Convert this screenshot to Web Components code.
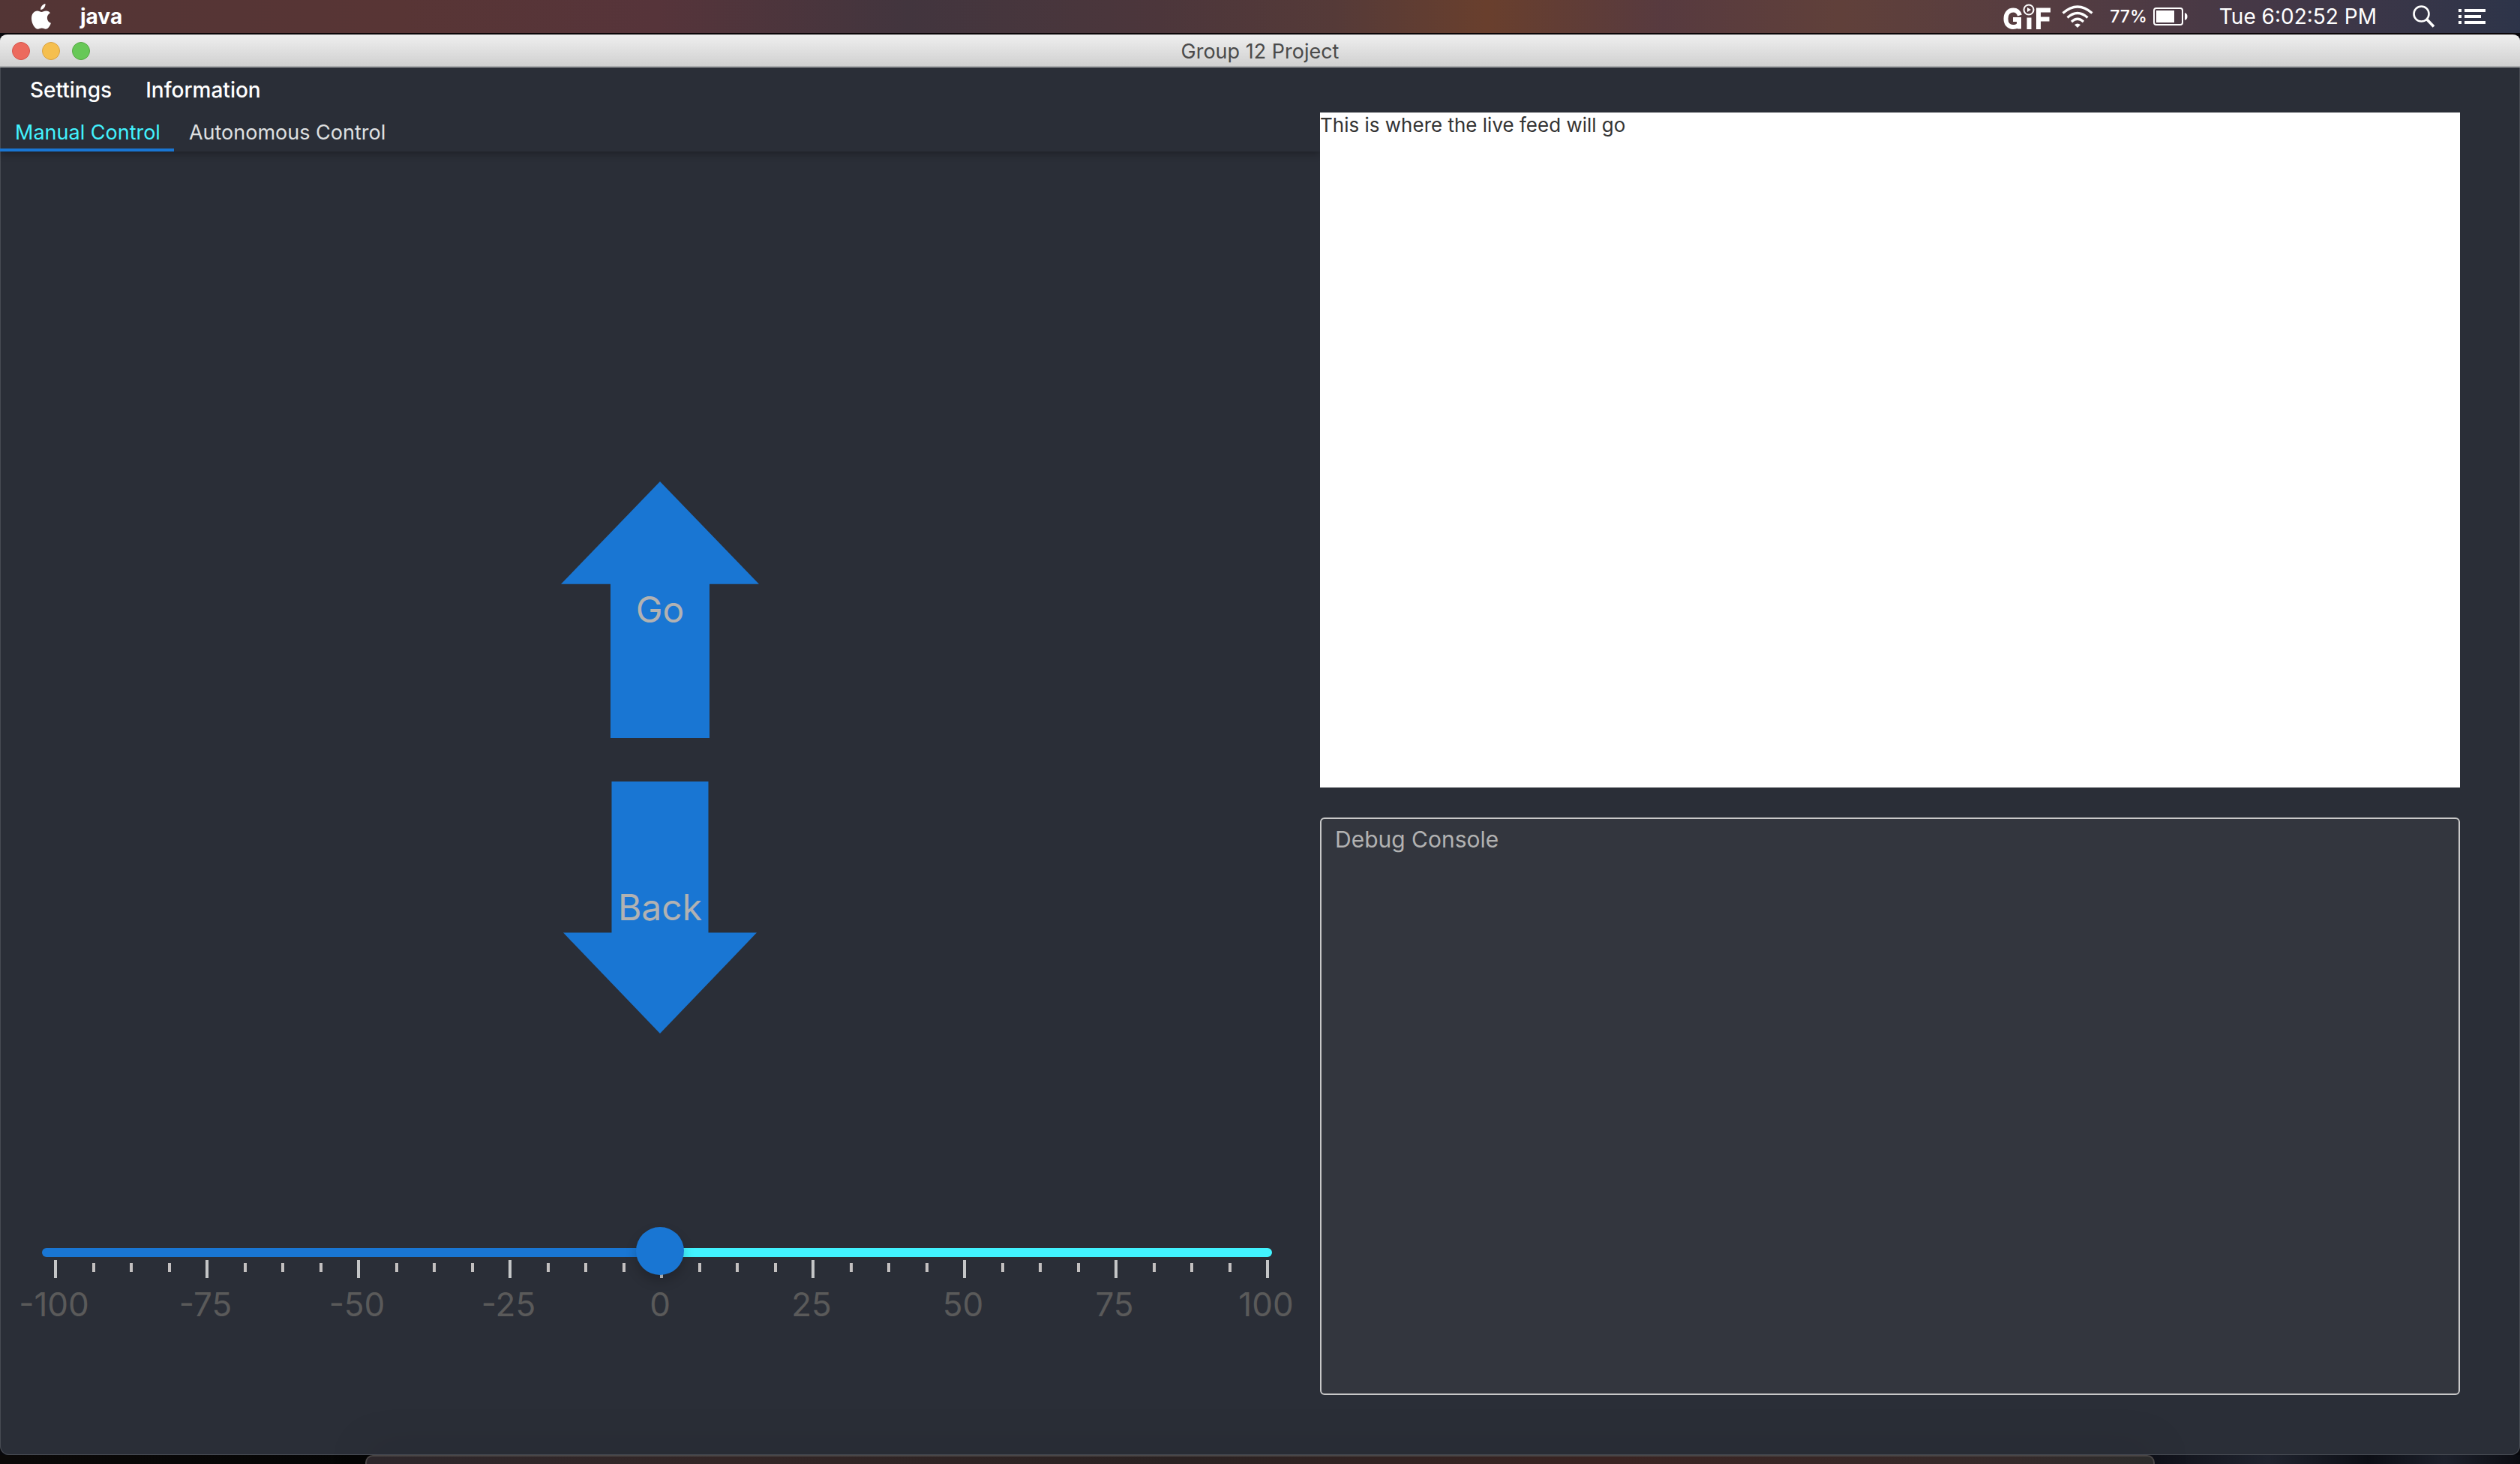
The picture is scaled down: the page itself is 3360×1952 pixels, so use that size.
<!DOCTYPE html>
<html lang="en">
<head>
<meta charset="utf-8">
<title>Group 12 Project</title>
<style>
  html, body { height: 100%; margin: 0; }
  body { font-family: Inter, "Liberation Sans", sans-serif; background: #08080c; }
</style>
</head>
<body>
<desktop-screen>
  <system-bar slot="bar" app="java" battery="77%" clock="Tue 6:02:52 PM"></system-bar>
  <app-window heading="Group 12 Project">
    <menu-row slot="menu"><button>Settings</button><button>Information</button></menu-row>
    <tab-strip slot="main">
      <button slot="tab" role="tab" aria-selected="true">Manual Control</button>
      <button slot="tab" role="tab" aria-selected="false">Autonomous Control</button>
      <drive-pad>
        <arrow-button direction="up">Go</arrow-button>
        <arrow-button direction="down">Back</arrow-button>
      </drive-pad>
      <steering-slider min="-100" max="100" step="25" value="0"></steering-slider>
    </tab-strip>
    <live-feed slot="side">This is where the live feed will go</live-feed>
    <debug-console slot="side" text="Debug Console"></debug-console>
  </app-window>
</desktop-screen>

<script>
function define(name, render) {
  customElements.define(name, class extends HTMLElement {
    connectedCallback() {
      if (this.shadowRoot) return;
      this.attachShadow({ mode: 'open' }).innerHTML = render(this);
    }
  });
}

define('desktop-screen', () => `
  <style>
    :host { display: flex; flex-direction: column; height: 100vh; overflow: hidden; }
    ::slotted(app-window) { flex: 1; min-height: 0; }
    .below { height: 12px; flex: none; display: flex; justify-content: center;
      background: linear-gradient(90deg, #0b0908, #050505 14%, #0a0b12 84%, #20242f 90%, #0c0e15 94%, #1d212c 97%, #0b0c12); }
    .dock { width: 71%; box-sizing: border-box; border: 2px solid #4a4646; border-bottom: 0;
      border-radius: 10px 10px 0 0;
      background: linear-gradient(90deg, #2d272b, #332626 20%, #2a2222 45%, #3a2422 70%, #352a2a 92%, #2c2c2c);
      box-shadow: 0 0 60px rgba(0,0,0,.25); }
  </style>
  <slot name="bar"></slot><slot></slot>
  <div class="below"><div class="dock"></div></div>`);

define('system-bar', el => `
  <style>
    :host { display: flex; align-items: center; height: 44px; flex: none; box-sizing: border-box;
      padding: 0 45px 0 41px; color: #fff; font-size: 28px; line-height: 44px;
      background: linear-gradient(90deg, #533535, #583535 16%, #56343a 26%, #42353e 36%, #4c363b 46%, #553a38 53%, #693f2d 59%, #573a3f 66%, #60403a 73%, #573d40 80%, #423747 91%, #2d3449); }
    svg { display: block; flex: none; }
    b { font-weight: 700; margin-left: 38px; }
    .right { margin-left: auto; display: flex; align-items: center; }
    .wifi { margin-left: 14px; }
    .pct { font-size: 23px; font-weight: 500; margin-left: 22px; }
    .bat { margin-left: 8px; }
    .clock { margin-left: 42px; }
    .find { margin-left: 48px; }
    .list { margin-left: 31px; }
  </style>
  <svg width="28" height="34" viewBox="0 0 28 34" fill="#fff"><path d="M19.5 0c.3 4-2.700 8-6.300 8C12.800 4.300 16 .6 19.500 0ZM26 12.300c-2.800 1.700-4.200 3.800-4.100 6.600.1 3.200 1.800 5.600 5 6.800-1.500 4.500-4.300 8-6.900 8-1.900 0-3.200-1.200-5.200-1.200-2.100 0-3.500 1.200-5.300 1.200C5.500 33.700 1 26.500 1 19.500 1 13.200 4.700 9.500 8.800 9.500c2.200 0 4 1.400 5.600 1.400 1.500 0 3.600-1.600 6.300-1.500 2.200.1 4.200 1.100 5.300 2.900Z"/></svg>
  <b>${el.getAttribute('app')}</b>
  <div class="right">
    <svg width="64" height="34" viewBox="0 0 64 34" fill="none" stroke="#fff" stroke-width="6"><path d="M22 15.500C20.500 11 17.500 8.500 13.500 8.500 7 8.500 3.500 13.500 3.500 20S7 31 13 31c3.500 0 7-1.500 8-4V21h-8"/><path d="M21.500 20v13.500" stroke-width="5"/><path d="M34.500 18.500V34"/><path d="M47 34V8.500h16M47 20.500h14.500"/><circle cx="34" cy="8" r="6.500" stroke-width="2"/><path d="M32 5v6l5-3Z" fill="#fff" stroke="none"/></svg>
    <svg class="wifi" width="42" height="30" viewBox="0 0 42 30"><g fill="none" stroke="#fff" stroke-width="3.200"><path d="M1.500 10.500Q21-6.500 40.500 10.500"/><path d="M7.500 16.500Q21 4.500 34.500 16.500"/><path d="M13 22Q21 14.500 29 22"/></g><path d="M17 26Q21 23 25 26L21 30Z" fill="#fff"/></svg>
    <span class="pct">${el.getAttribute('battery')}</span>
    <svg class="bat" width="46" height="24" viewBox="0 0 46 24"><rect x="1" y="1" width="38" height="22" rx="3" fill="none" stroke="#fff" stroke-width="2"/><rect x="4" y="4" width="24" height="16" fill="#fff"/><path d="M42 7q3.500 1 3.500 5T42 17Z" fill="#fff"/></svg>
    <span class="clock">${el.getAttribute('clock')}</span>
    <svg class="find" width="30" height="30" viewBox="0 0 30 30" fill="none" stroke="#fff"><circle cx="11.500" cy="11.500" r="10" stroke-width="2.600"/><path d="M18.500 18.500 28 28.500" stroke-width="3.600"/></svg>
    <svg class="list" width="37" height="20" viewBox="0 0 37 20" fill="#fff"><path d="M0 0h4v4H0ZM8 0h28v4H8ZM0 8h4v4H0ZM8 8h22v4H8ZM0 16h4v4H0ZM8 16h28v4H8Z"/></svg>
  </div>`);

define('app-window', el => `
  <style>
    :host { display: flex; flex-direction: column; background: #2a2e37; border-top: 2px solid #0b0608;
      border-radius: 10px 10px 12px 12px; overflow: hidden; box-shadow: inset 0 0 0 1px #474b53; }
    header { display: grid; grid-template-columns: 1fr auto 1fr; align-items: center; height: 44px; box-sizing: border-box; flex: none;
      padding: 0 16px; background: linear-gradient(#efefef, #d0d0d0); border-bottom: 2px solid #a9abad; }
    h1 { margin: 0; font-size: 27px; font-weight: 400; line-height: 38px; padding-top: 4px; color: #4a4a4a; }
    .lights { display: flex; gap: 16px; padding-top: 2px; }
    .lights button { width: 24px; height: 24px; padding: 0; border-radius: 50%; border: 1px solid #d6554c; background: #ec6a5e; }
    .lights button:nth-child(2) { border-color: #d9a243; background: #f5bf4f; }
    .lights button:nth-child(3) { border-color: #57a844; background: #67c857; }
    .body { flex: 1; min-height: 0; display: grid; grid-template-columns: 110fr 95fr; padding-right: 80px; }
    aside { display: flex; flex-direction: column; gap: 40px; padding-bottom: 80px; min-width: 0; }
    ::slotted(live-feed) { flex: 90; }
    ::slotted(debug-console) { flex: 77; }
  </style>
  <header>
    <div class="lights"><button aria-label="Close"></button><button aria-label="Minimise"></button><button aria-label="Zoom"></button></div>
    <h1>${el.getAttribute('heading')}</h1>
  </header>
  <slot name="menu"></slot>
  <div class="body"><slot name="main"></slot><aside><slot name="side"></slot></aside></div>`);

define('menu-row', () => `
  <style>
    :host { display: flex; gap: 45px; height: 60px; padding-left: 40px; flex: none; align-items: center; }
    ::slotted(button) { font: 500 28px/60px Inter, "Liberation Sans", sans-serif; color: #fff; background: none; border: 0; padding: 0; }
  </style><slot></slot>`);

define('tab-strip', () => `
  <style>
    :host { display: flex; flex-direction: column; min-width: 0; }
    nav { display: flex; height: 52px; flex: none; box-shadow: 0 3px 10px rgba(0,0,0,.3); clip-path: inset(0 0 -16px 0); }
    ::slotted(button) { font: 27px/42px Inter, "Liberation Sans", sans-serif; height: 52px; color: #dfe0e1;
      background: none; border: 0; border-bottom: 4px solid transparent; padding: 6px 18px 0 20px; }
    ::slotted(button[aria-selected="true"]) { color: #42f3ff; border-color: #1976d3; }
    section { display: flex; flex-direction: column; gap: 258px; padding-top: 440px; }
  </style>
  <nav role="tablist"><slot name="tab"></slot></nav>
  <section role="tabpanel"><slot></slot></section>`);

define('drive-pad', () => `
  <style>:host { display: flex; flex-direction: column; align-items: center; gap: 58px; }</style><slot></slot>`);

define('arrow-button', () => `
  <style>
    :host { display: block; }
    button { width: 264px; height: 342px; padding: 0; border: 0; background: #1976d3; color: #b2b2b2;
      font: 48px/60px Inter, "Liberation Sans", sans-serif; display: block;
      clip-path: polygon(50% 0, 100% 40%, 75% 40%, 75% 100%, 25% 100%, 25% 40%, 0 40%); }
    :host([direction="down"]) button { width: 258px; height: 336px;
      clip-path: polygon(25% 0, 75% 0, 75% 60%, 100% 60%, 50% 100%, 0 60%, 25% 60%); }
  </style><button><slot></slot></button>`);

define('steering-slider', el => {
  const min = +el.getAttribute('min'), max = +el.getAttribute('max'), step = +el.getAttribute('step');
  let ticks = '', labels = '';
  for (let v = min; v <= max; v += step) {
    labels += `<span>${v}</span>`;
    ticks += '<i class="major"></i>' + (v < max ? '<i></i><i></i><i></i>' : '');
  }
  return `
  <style>
    :host { display: block; padding: 0 64px 0 56px; }
    .rail { display: grid; align-items: center; }
    .track, input { grid-area: 1 / 1; }
    .track { height: 12px; margin-top: 4px; border-radius: 6px; background: linear-gradient(90deg, #1976d3 50%, #42f3ff 50%); }
    input { appearance: none; background: none; margin: 0 -8px 0 0; height: 64px; position: relative; z-index: 1; }
    input::-webkit-slider-thumb { appearance: none; width: 64px; height: 64px; border-radius: 50%; background: #1976d3; box-shadow: 0 8px 16px rgba(0,0,0,.2); }
    .ticks { display: flex; justify-content: space-between; align-items: center; height: 24px; margin: -20px 4px 0 16px; }
    i { width: 4px; height: 12px; background: #c3c0c0; margin-bottom: 4px; }
    .major { height: 24px; margin: 0; background: #c4c6c7; }
    .labels { display: flex; justify-content: space-between; margin: 8px 8px 0 16px; font-size: 44px; line-height: 54px; color: #5a5a5a; }
    span { width: 0; display: flex; justify-content: center; white-space: nowrap; }
  </style>
  <div class="rail"><div class="track"></div><input type="range" aria-label="Steering" min="${min}" max="${max}" value="${el.getAttribute('value')}"></div>
  <div class="ticks">${ticks}</div>
  <div class="labels">${labels}</div>`;
});

define('live-feed', () => `
  <style>:host { display: block; background: #fff; color: #333; font-size: 26px; line-height: 34px; }</style><slot></slot>`);

define('debug-console', el => `
  <style>
    :host { display: flex; }
    textarea { flex: 1; box-sizing: border-box; margin: 0; resize: none; border: 2px solid #c8c8c8; border-radius: 6px;
      background: #33363e; color: #b2b2b2; padding: 8px 18px; font: 30px/38px Inter, "Liberation Sans", sans-serif; outline: 0; }
  </style><textarea aria-label="Debug console">${el.getAttribute('text')}</textarea>`);
</script>
</body>
</html>
